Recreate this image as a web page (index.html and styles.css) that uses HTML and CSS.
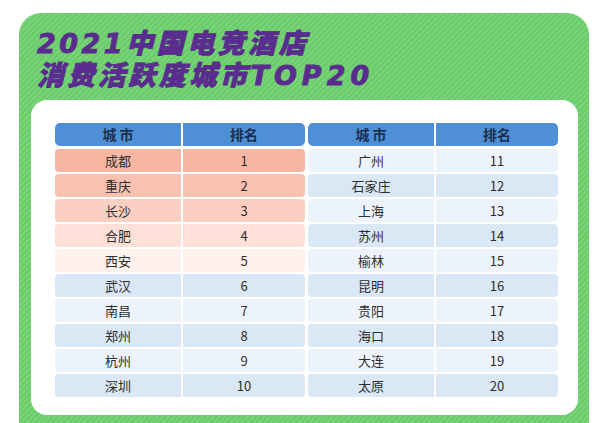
FILE: index.html
```html
<!DOCTYPE html>
<html lang="zh-CN">
<head>
<meta charset="utf-8">
<title>2021中国电竞酒店消费活跃度城市TOP20</title>
<link rel="stylesheet" href="styles.css">
</head>
<body>
<div class="card">
  <h1 class="title"><span class="line">2021中国电竞酒店</span><span class="line">消费活跃度城市<span class="wide">TOP20</span></span></h1>
  <div class="panel">
    <div class="tables">
      <div class="table">
        <div class="row head"><div class="cell">城 市</div><div class="cell">排名</div></div>
        <div class="row r1"><div class="cell">成都</div><div class="cell">1</div></div>
        <div class="row r2"><div class="cell">重庆</div><div class="cell">2</div></div>
        <div class="row r3"><div class="cell">长沙</div><div class="cell">3</div></div>
        <div class="row r4"><div class="cell">合肥</div><div class="cell">4</div></div>
        <div class="row r5"><div class="cell">西安</div><div class="cell">5</div></div>
        <div class="row dark"><div class="cell">武汉</div><div class="cell">6</div></div>
        <div class="row light"><div class="cell">南昌</div><div class="cell">7</div></div>
        <div class="row dark"><div class="cell">郑州</div><div class="cell">8</div></div>
        <div class="row light"><div class="cell">杭州</div><div class="cell">9</div></div>
        <div class="row dark"><div class="cell">深圳</div><div class="cell">10</div></div>
      </div>
      <div class="table">
        <div class="row head"><div class="cell">城 市</div><div class="cell">排名</div></div>
        <div class="row light"><div class="cell">广州</div><div class="cell">11</div></div>
        <div class="row dark"><div class="cell">石家庄</div><div class="cell">12</div></div>
        <div class="row light"><div class="cell">上海</div><div class="cell">13</div></div>
        <div class="row dark"><div class="cell">苏州</div><div class="cell">14</div></div>
        <div class="row light"><div class="cell">榆林</div><div class="cell">15</div></div>
        <div class="row dark"><div class="cell">昆明</div><div class="cell">16</div></div>
        <div class="row light"><div class="cell">贵阳</div><div class="cell">17</div></div>
        <div class="row dark"><div class="cell">海口</div><div class="cell">18</div></div>
        <div class="row light"><div class="cell">大连</div><div class="cell">19</div></div>
        <div class="row dark"><div class="cell">太原</div><div class="cell">20</div></div>
      </div>
    </div>
  </div>
</div>
</body>
</html>
```
FILE: styles.css
```css
html, body {
  margin: 0;
  padding: 0;
  background: #ffffff;
}
body {
  height: 423px;
  overflow: hidden;
  font-family: "Noto Sans CJK SC", "Noto Sans", sans-serif;
}
.card {
  box-sizing: border-box;
  height: 410px;
  margin: 13px 11px 0 19px;
  padding: 15px 11px 8px 12px;
  border-radius: 22px 22px 0 0;
  background-color: #6bcd6b;
  background-image: repeating-linear-gradient(135deg, #69cb69 0 2px, #78d477 2px 4px);
}
.title {
  margin: 0 0 8px 6px;
  font-family: "DejaVu Sans", "Noto Sans CJK SC", sans-serif;
  font-weight: 900;
  font-style: italic;
  font-size: 27px;
  line-height: 32px;
  letter-spacing: 3.5px;
  color: #5a2c8f;
  -webkit-text-stroke: 0.9px #5a2c8f;
}
.line {
  display: block;
}
.wide {
  letter-spacing: 5px;
}
.panel {
  background: #ffffff;
  border-radius: 16px;
  padding: 23px 20px 18px 24px;
}
.tables {
  display: grid;
  grid-template-columns: 1fr 1fr;
  column-gap: 3px;
}
.table {
  display: flex;
  flex-direction: column;
  gap: 2px;
}
.row {
  display: grid;
  grid-template-columns: 126px 1fr;
  column-gap: 2px;
  height: 23px;
  border-radius: 4px;
  overflow: hidden;
  font-size: 13px;
  color: #2e2e2e;
}
.row .cell {
  display: flex;
  align-items: center;
  justify-content: center;
  line-height: 23px;
}
.head {
  margin-bottom: 1px;
  border-radius: 5px;
  font-size: 14px;
  font-weight: 700;
  color: #1b3050;
}
.head .cell { background: #4e8fd5; }
.r1 .cell { background: #f8b6a2; }
.r2 .cell { background: #fac1b0; }
.r3 .cell { background: #fbd0c3; }
.r4 .cell { background: #fde1d8; }
.r5 .cell { background: #fef0eb; }
.dark .cell { background: #dae7f4; }
.light .cell { background: #edf3fa; }
```
